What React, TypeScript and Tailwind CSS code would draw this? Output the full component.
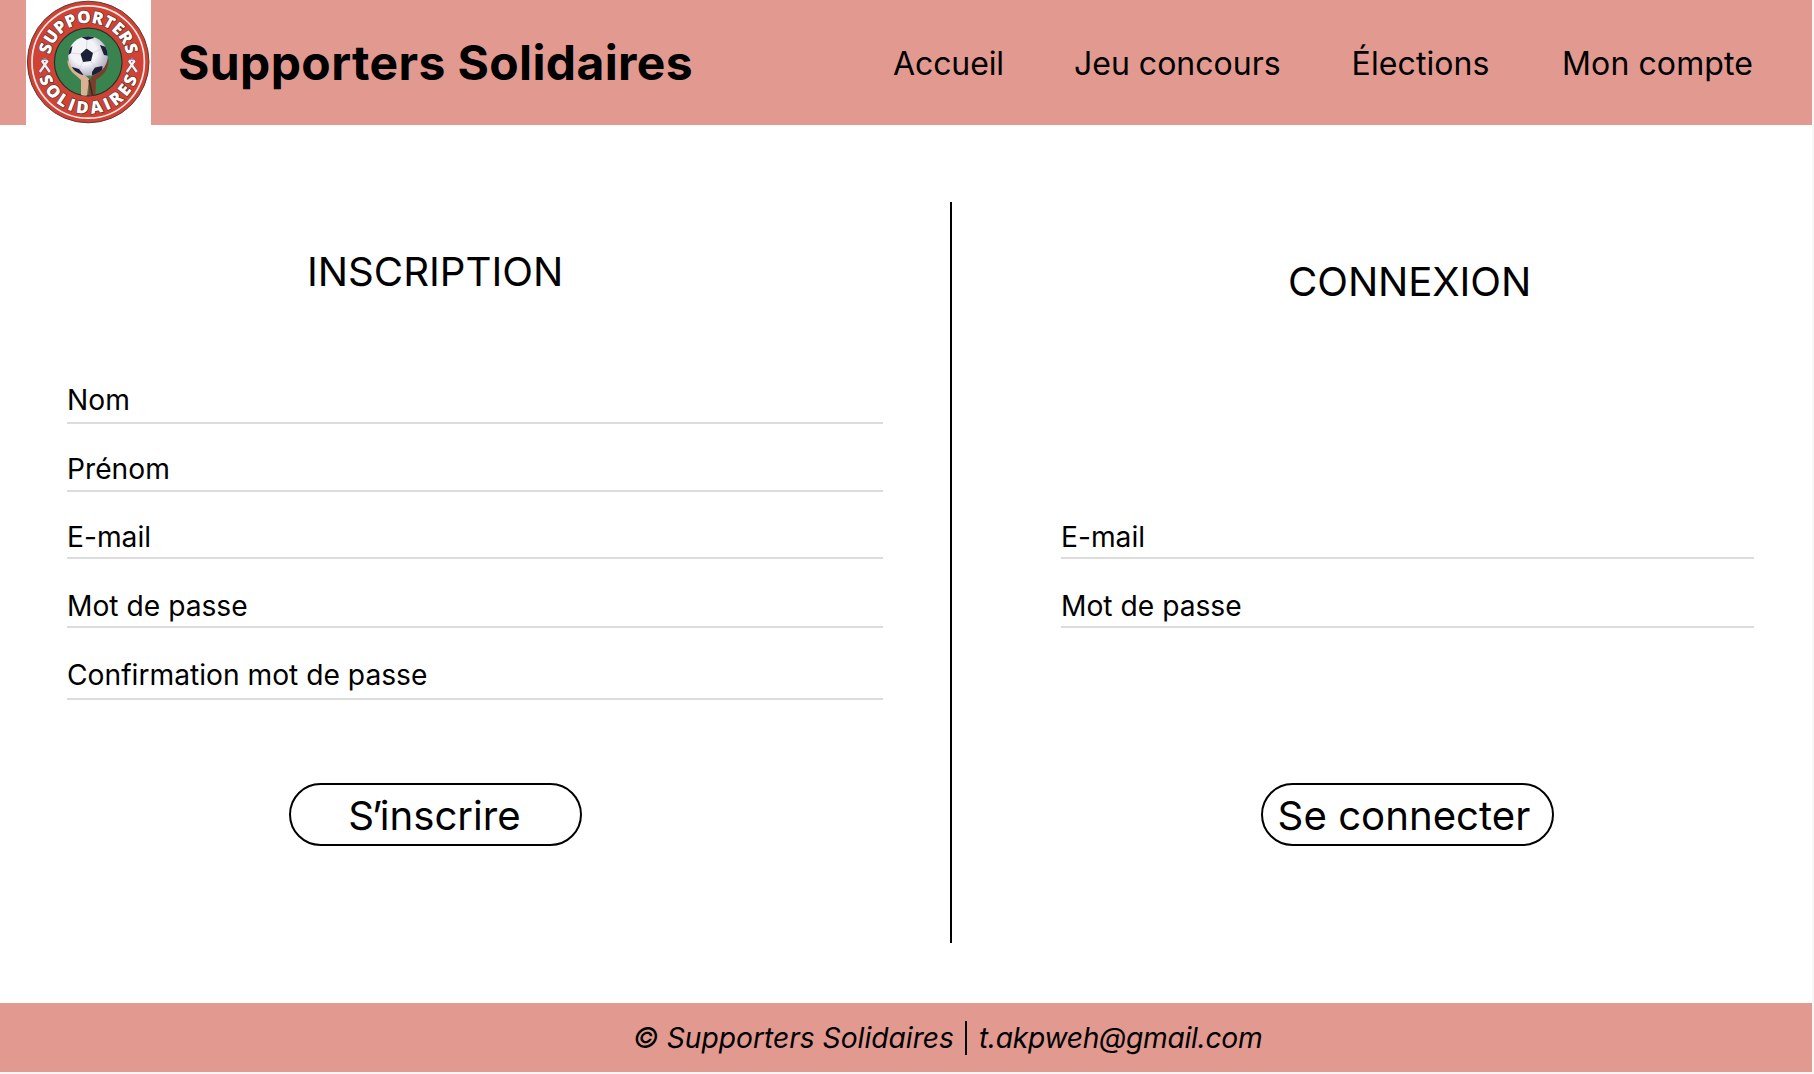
import React from "react";

type FieldProps = { label: string; rule: string };

const navItems = [
  { label: "Accueil", spacing: "-mr-[2.5px] tracking-[-0.1px]" },
  { label: "Jeu concours", spacing: "-mr-[1.5px] tracking-normal" },
  { label: "Élections", spacing: "tracking-[0.1px]" },
  { label: "Mon compte", spacing: "tracking-[0.1px]" },
];

const signUpFields: FieldProps[] = [
  { label: "Nom", rule: "mt-[5px]" },
  { label: "Prénom", rule: "mt-[4.5px]" },
  { label: "E-mail", rule: "mt-[3px]" },
  { label: "Mot de passe", rule: "mt-[3px]" },
  { label: "Confirmation mot de passe", rule: "mt-[6.4px]" },
];

const signInFields: FieldProps[] = [
  { label: "E-mail", rule: "mt-[3px]" },
  { label: "Mot de passe", rule: "mt-[3px]" },
];

function Ribbon({ x, y }: { x: number; y: number }) {
  return (
    <g transform={`translate(${x} ${y})`} fill="none">
      <path d="M-5 7 L2.400 -4 Q0 -7.500 -2.400 -4 L5 7" stroke="#6b4545" strokeWidth="3.3" />
      <path d="M-5 6.500 L2.400 -4 Q0 -7.500 -2.400 -4 L5 6.500" stroke="#f6f0f4" strokeWidth="2.3" />
      <path d="M-2 -5.800 Q0 -7.200 2 -5.800" stroke="#8a86b5" strokeWidth="1.4" />
    </g>
  );
}

function Logo() {
  return (
    <svg viewBox="0 0 125 125" className="h-[125px] w-[125px] shrink-0 bg-white" role="img" aria-label="Supporters Solidaires">
      <defs>
        <path id="arcTop" d="M23.300 62 A39 39 0 0 1 101.300 62" />
        <path id="arcBottom" d="M10.500 62 A51.700 51.700 0 0 0 113.900 62" />
        <radialGradient id="ball" cx="0.4" cy="0.4" r="0.65">
          <stop offset="0.5" stopColor="#f4f3f8" />
          <stop offset="1" stopColor="#a9a7bb" />
        </radialGradient>
        <clipPath id="ballClip">
          <circle cx="62" cy="56" r="19.8" />
        </clipPath>
      </defs>
      <circle cx="62.2" cy="62" r="60.8" fill="#d04234" stroke="#5d3a36" strokeWidth="1" />
      <circle cx="62.2" cy="62" r="56.2" fill="none" stroke="#fbe9e6" strokeWidth="1.7" />
      <circle cx="62.2" cy="62" r="33.8" fill="#39834f" stroke="#26332a" strokeWidth="1.2" />
      <path d="M41.500 60 Q41 66 46 72 L55 80 L55 95 Q58 96 61 95.500 L63 79 Q58 73 52 72 L44 62Z" fill="#dcb193" />
      <path d="M82.500 59 Q83 66 79 72 Q75 77 70 80 L69.500 94.500 Q66 96 62.500 95.500 L63.500 80 Q68 73 75 70 L80 60Z" fill="#7a3f2b" />
      <path d="M63 80 L66.500 95" stroke="#4a2018" strokeWidth="1.4" />
      <circle cx="62" cy="56" r="19.8" fill="url(#ball)" />
      <g clipPath="url(#ballClip)" fill="#1c2138">
        <path d="M60.500 48.500 L67 53 L65 61 L57 62 L54.500 54Z" />
        <path d="M56 37.500 L61 40 L68 38 L66 34 L57 34Z" />
        <path d="M74 45 L80 47 L84 56 L78 55Z" />
        <path d="M66 72 L69 67.500 L76.500 66 L76 74 L66 77Z" />
        <path d="M46 67 L53 69 L57.500 75 L48 75Z" />
        <path d="M41 56 L42 49 L46.500 46 L45 53Z" />
        <path
          d="M60.500 48.500 L61 40 M67 53 L75 49 M65 61 L69 67.500 M57 62 L53 69 M54.500 54 L45 53"
          stroke="#c9c8d6"
          strokeWidth="0.6"
        />
      </g>
      <g
        fill="#fff"
        stroke="#4a2a28"
        strokeWidth="1.2"
        className="font-['Open_Sans'] text-[17px] font-extrabold [paint-order:stroke]"
      >
        <text textAnchor="middle">
          <textPath href="#arcTop" startOffset="50%" textLength="108">
            SUPPORTERS
          </textPath>
        </text>
        <text textAnchor="middle">
          <textPath href="#arcBottom" startOffset="50%" textLength="130">
            SOLIDAIRES
          </textPath>
        </text>
      </g>
      <Ribbon x={18.8} y={65.5} />
      <Ribbon x={105.8} y={65.5} />
    </svg>
  );
}

function Field({ label, rule }: FieldProps) {
  return (
    <div className="h-[68.7px]">
      <div className="text-[28.2px] leading-[34px]">{label}</div>
      <div className={`h-[2px] bg-[#dcdcdc] ${rule}`} />
    </div>
  );
}

function PillButton({ children }: { children: React.ReactNode }) {
  return (
    <button className="flex h-[63px] w-[293px] items-center justify-center rounded-full border-2 border-black pt-[4px] text-[40.200px] leading-none whitespace-nowrap">
      {children}
    </button>
  );
}

export default function App() {
  return (
    <div className="flex h-[1074px] w-[1814px] flex-col overflow-hidden border-r-2 border-b-2 border-[#f7f7f7] bg-white font-['Inter',sans-serif] text-black">
      <header className="flex h-[125px] shrink-0 items-center bg-[#e19990] pr-[59px] pl-[26px]">
        <Logo />
        <h1 className="ml-[27px] text-[48px] leading-none font-bold tracking-[0.38px] whitespace-nowrap">Supporters Solidaires</h1>
        <nav className="ml-auto flex gap-[72.500px] pt-[2px] text-[32px] leading-none whitespace-nowrap">
          {navItems.map((item) => (
            <a key={item.label} className={item.spacing}>
              {item.label}
            </a>
          ))}
        </nav>
      </header>

      <main className="flex h-[878px] shrink-0">
        <section className="w-[950px] pr-[67px] pl-[67px]">
          <h2 className="mt-[122px] ml-[240px] text-[40.200px] leading-[50px]">INSCRIPTION</h2>
          <div className="mt-[86px]">
            {signUpFields.map((f) => (
              <Field key={f.label} {...f} />
            ))}
          </div>
          <div className="mt-[56.500px] ml-[222px]">
            <PillButton>
              <span className="mr-[2px]">
                <span className="tracking-[-2.400px]">S’</span>inscrire
              </span>
            </PillButton>
          </div>
        </section>
        <div className="mt-[77px] h-[741px] w-[2px] bg-black" />
        <section className="flex-1 pr-[58px] pl-[109px]">
          <h2 className="mt-[132px] ml-[227px] text-[40.200px] leading-[50px] tracking-[-0.1px]">CONNEXION</h2>
          <div className="mt-[213.400px]">
            {signInFields.map((f) => (
              <Field key={f.label} {...f} />
            ))}
          </div>
          <div className="mt-[125.200px] ml-[200px]">
            <PillButton>
              <span className="mr-[7px]">Se connecter</span>
            </PillButton>
          </div>
        </section>
      </main>

      <footer className="flex h-[69px] shrink-0 items-center bg-[#e19990] pl-[633px] text-[28.2px] leading-none whitespace-nowrap italic">
        <span className="pt-[2px]">© Supporters Solidaires</span>
        <span className="mr-[12px] ml-[11px] h-[34px] w-[2px] bg-black" />
        <span className="pt-[2px] tracking-[-0.270px]">t.akpweh@gmail.com</span>
      </footer>
    </div>
  );
}
